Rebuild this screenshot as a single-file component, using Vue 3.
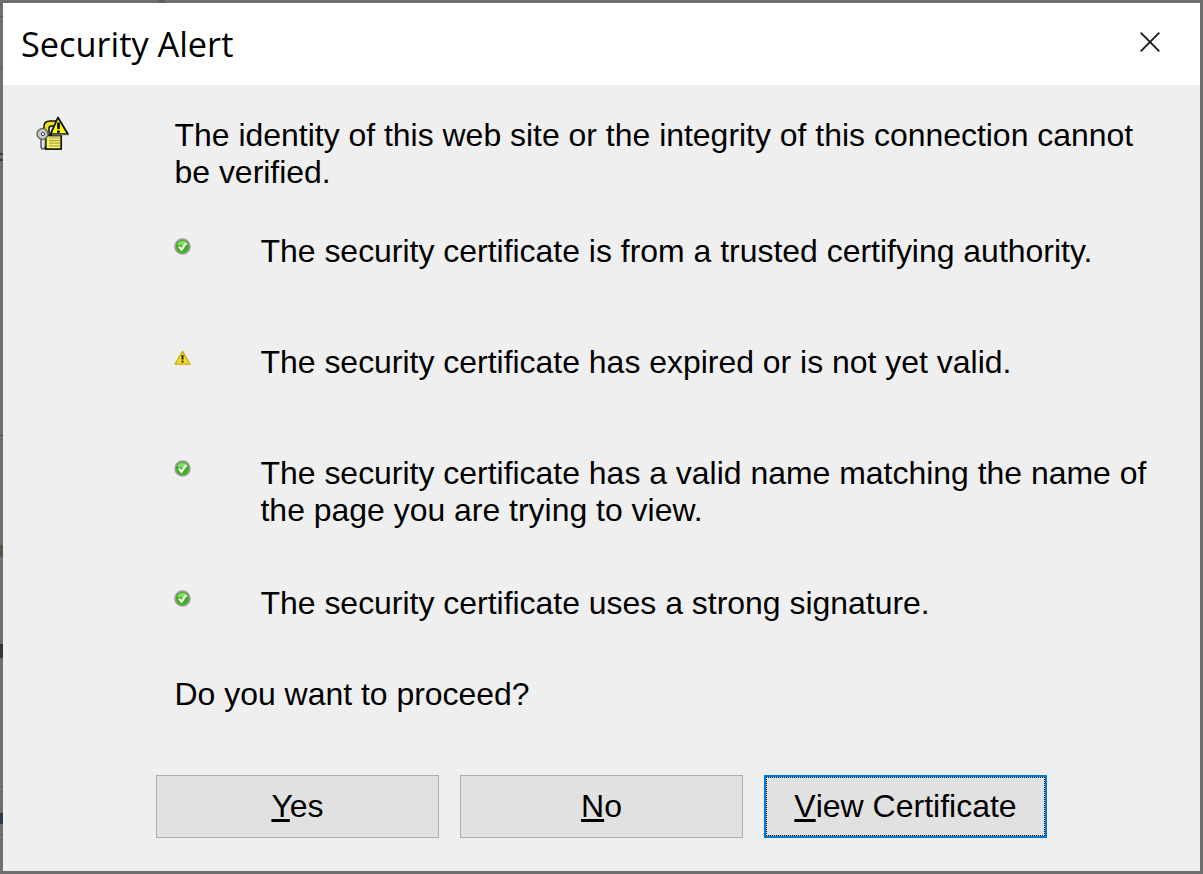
<template>
  <div class="dialog">
    <span
      v-for="m in marks"
      :key="m.y + '-' + m.x"
      class="mark"
      :style="{ left: m.x + 'px', top: m.y + 'px', width: m.w + 'px', height: m.h + 'px', background: m.c }"
    ></span>
    <header class="titlebar">
      <h1 class="title">Security Alert</h1>
      <svg class="close" width="20" height="20" viewBox="0 0 20 20" aria-label="Close">
        <path d="M0.7 0.7 L19.3 19.3 M19.3 0.7 L0.7 19.3" stroke="#1c1c1c" stroke-width="1.9" fill="none" />
      </svg>
    </header>
    <main class="content">
      <div class="lock-col">
        <svg class="lock" width="34" height="34" viewBox="0 0 34 34">
          <path d="M8 21 V10.5 Q8 5 14 5 H20 V10 H15.5 Q13 10 13 12.5 V21 Z" fill="#eee01c" stroke="#111" stroke-width="1.5" />
          <rect x="9.8" y="19.5" width="15.4" height="13.6" fill="#f9f26c" stroke="#111" stroke-width="1.7" />
          <path d="M13 22 H24 M13 24.6 H24 M13 27.2 H24 M13 29.8 H24" stroke="#aaa648" stroke-width="1.2" />
          <path d="M14.5 18.2 L22 1.5 L32 18.2 Z" fill="#ffff00" stroke="#111" stroke-width="1.8" stroke-linejoin="round" />
          <path d="M32.8 18.9 H16" stroke="#9a9a9a" stroke-width="1" />
          <path d="M22.5 6.5 V13" stroke="#111" stroke-width="2.8" />
          <rect x="21" y="14.4" width="2.8" height="2.4" fill="#111" />
          <path d="M5 21 H9.4 V30 L8 33 H6 L5 31 Z" fill="#e2e2e2" stroke="#333" stroke-width="1.2" />
          <circle cx="6.5" cy="18" r="5.4" fill="#c9c9c9" stroke="#666" stroke-width="1.5" />
          <circle cx="7" cy="18" r="1.7" fill="#fff" stroke="#444" stroke-width="1" />
        </svg>
      </div>
      <div class="body">
        <p class="intro">The identity of this web site or the integrity of this connection cannot be verified.</p>
        <div
          v-for="item in items"
          :key="item.text"
          class="row"
          :class="[item.size, item.ok ? 'is-ok' : 'is-warn']"
        >
          <span class="icon-cell">
            <svg v-if="item.ok" width="17" height="17" viewBox="0 0 17 17">
              <circle cx="8.5" cy="8.5" r="7.4" fill="#3eb021" stroke="#9c9c9c" stroke-width="1.6" />
              <path d="M3.2 6.4 A5.8 5.8 0 0 1 13.8 6.4 Q8.5 8.4 3.2 6.4Z" fill="#86dc6c" />
              <path d="M4.9 8.6 L7.5 11.7 L12.1 5.2" fill="none" stroke="#fff" stroke-width="2.1" />
            </svg>
            <svg v-else width="17" height="17" viewBox="0 0 17 17">
              <path d="M8.5 1.2 L16 14.2 H1 Z" fill="#f6dc1e" stroke="#c9a80e" stroke-width="1.2" stroke-linejoin="round" />
              <path d="M8.5 5 V9.6" stroke="#222" stroke-width="2" />
              <rect x="7.5" y="10.6" width="2" height="2" fill="#222" />
            </svg>
          </span>
          <span class="row-text">{{ item.text }}</span>
        </div>
        <p class="question">Do you want to proceed?</p>
      </div>
    </main>
    <footer class="actions">
      <button class="btn"><u>Y</u>es</button>
      <button class="btn"><u>N</u>o</button>
      <button class="btn focused"><span class="focus-ring"><u>V</u>iew Certificate</span></button>
    </footer>
  </div>
</template>

<script setup>
const items = [
  { ok: true, size: 'tall', text: 'The security certificate is from a trusted certifying authority.' },
  { ok: false, size: 'tall', text: 'The security certificate has expired or is not yet valid.' },
  { ok: true, size: 'double', text: 'The security certificate has a valid name matching the name of the page you are trying to view.' },
  { ok: true, size: 'short', text: 'The security certificate uses a strong signature.' }
]
const marks = [
  { x: 0, y: 16, w: 3, h: 1, c: '#555' },
  { x: 0, y: 67, w: 3, h: 1, c: '#555' },
  { x: 0, y: 153, w: 3, h: 2, c: '#3a3a3a' },
  { x: 0, y: 159, w: 3, h: 2, c: '#3a3a3a' },
  { x: 0, y: 435, w: 3, h: 1, c: '#4e4e4e' },
  { x: 0, y: 545, w: 3, h: 12, c: '#5c5448' },
  { x: 0, y: 644, w: 3, h: 14, c: '#33373d' },
  { x: 0, y: 786, w: 3, h: 1, c: '#2f6a9e' },
  { x: 0, y: 813, w: 3, h: 11, c: '#2c3a48' },
  { x: 0, y: 834, w: 3, h: 1, c: '#2f6a9e' },
  { x: 158, y: 0, w: 7, h: 3, c: '#5e5e5e' }
]
</script>

<style>
html, body { margin: 0; background: #6e6e6e; }
</style>

<style scoped>
.dialog {
  position: relative;
  box-sizing: border-box;
  width: 1203px;
  height: 874px;
  border: 3px solid #6f6f6f;
  background: #efefef;
  display: flex;
  flex-direction: column;
  font-family: "Liberation Sans", Arial, sans-serif;
  color: #000;
}
.mark { position: absolute; margin: -3px 0 0 -3px; }
.titlebar {
  height: 82px;
  flex: none;
  background: #fff;
  display: flex;
  align-items: center;
  justify-content: space-between;
  padding: 0 40px 0 18px;
}
.title {
  margin: 0;
  font-family: "Open Sans", "Noto Sans", sans-serif;
  font-size: 34.3px;
  font-weight: 400;
  color: #000;
  line-height: 82px;
}
.close { flex: none; display: block; margin-top: -4px; }
.content {
  flex: 1;
  display: flex;
}
.lock-col { width: 171.5px; flex: none; padding: 31px 0 0 32.5px; box-sizing: border-box; }
.lock { display: block; }
.body { width: 990px; padding-top: 32px; }
p { margin: 0; font-size: 31.95px; line-height: 37px; }
.intro { height: 116px; }
.row { display: flex; font-size: 31.95px; line-height: 37px; }
.row.tall { height: 111px; }
.row.double { height: 130px; }
.row.short { height: 91px; }
.icon-cell { width: 86px; flex: none; padding-top: 5px; box-sizing: border-box; }
.is-warn .icon-cell { padding-top: 6px; }
.icon-cell svg { display: block; margin-left: -0.5px; }
.row-text { display: block; }
.actions {
  flex: none;
  display: flex;
  gap: 21px;
  padding: 0 0 33px 153px;
}
.btn {
  box-sizing: border-box;
  width: 283px;
  height: 63px;
  padding: 0;
  background: #e1e1e1;
  border: 1px solid #adadad;
  font: 32px/37px "Liberation Sans", Arial, sans-serif;
  color: #000;
}
.btn.focused { border: 2px solid #0078d7; padding: 0; }
.focus-ring {
  display: flex;
  align-items: center;
  justify-content: center;
  white-space: pre;
  height: 100%;
  box-sizing: border-box;
  border: 1px dotted #000;
}
</style>
